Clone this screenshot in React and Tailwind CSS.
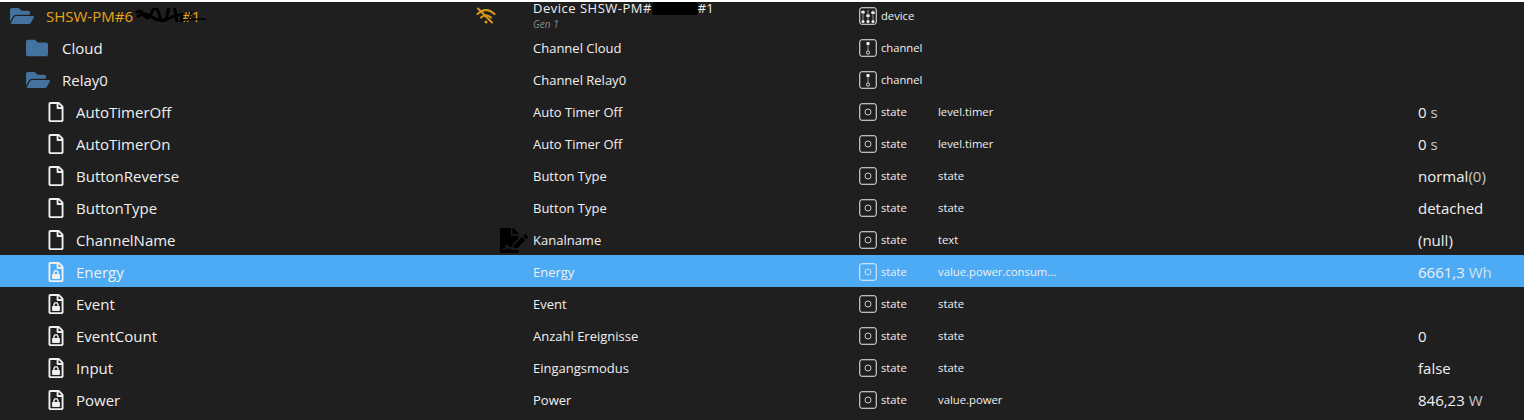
import { FaFolder, FaFolderOpen, FaRegFile, FaFileSignature, FaLock } from 'react-icons/fa'

const rows = [
  { kind: 'open', level: 0, name: 'SHSW-PM#6', device: true, title: 'Device SHSW-PM#', type: 'device' },
  { kind: 'folder', level: 1, name: 'Cloud', title: 'Channel Cloud', type: 'channel' },
  { kind: 'open', level: 1, name: 'Relay0', title: 'Channel Relay0', type: 'channel' },
  { kind: 'file', level: 2, name: 'AutoTimerOff', title: 'Auto Timer Off', type: 'state', role: 'level.timer', value: '0', unit: ' s' },
  { kind: 'file', level: 2, name: 'AutoTimerOn', title: 'Auto Timer Off', type: 'state', role: 'level.timer', value: '0', unit: ' s' },
  { kind: 'file', level: 2, name: 'ButtonReverse', title: 'Button Type', type: 'state', role: 'state', value: 'normal', unit: '(0)' },
  { kind: 'file', level: 2, name: 'ButtonType', title: 'Button Type', type: 'state', role: 'state', value: 'detached' },
  { kind: 'file', level: 2, name: 'ChannelName', title: 'Kanalname', type: 'state', role: 'text', value: '(null)', edit: true },
  { kind: 'lock', level: 2, name: 'Energy', title: 'Energy', type: 'state', role: 'value.power.consum...', value: '6661,3', unit: ' Wh', selected: true },
  { kind: 'lock', level: 2, name: 'Event', title: 'Event', type: 'state', role: 'state' },
  { kind: 'lock', level: 2, name: 'EventCount', title: 'Anzahl Ereignisse', type: 'state', role: 'state', value: '0' },
  { kind: 'lock', level: 2, name: 'Input', title: 'Eingangsmodus', type: 'state', role: 'state', value: 'false' },
  { kind: 'lock', level: 2, name: 'Power', title: 'Power', type: 'state', role: 'value.power', value: '846,23', unit: ' W' },
]

function TypeIcon({ type }) {
  return (
    <svg viewBox="0 0 18 18" className="w-[18px] h-[18px] shrink-0" fill="none" stroke="currentColor">
      <rect x="0.75" y="0.75" width="16.5" height="16.5" rx="2" strokeWidth="1" />
      {type === 'state' && <circle cx="9" cy="9" r="3" strokeWidth="1" opacity="0.8" />}
      {type === 'channel' && (
        <g>
          <path d="M9 3v9" strokeWidth="0.8" opacity="0.7" />
          <rect x="7.5" y="3" width="3" height="3" fill="currentColor" stroke="none" />
          <circle cx="9" cy="13.5" r="1.6" strokeWidth="0.9" />
        </g>
      )}
      {type === 'device' && (
        <g>
          <path d="M4 3v10M9 3v10M14 3v10" strokeWidth="0.8" opacity="0.7" />
          <rect x="2.3" y="4" width="3.4" height="2.4" fill="currentColor" stroke="none" />
          <rect x="7.3" y="7.5" width="3.4" height="2.4" fill="currentColor" stroke="none" />
          <rect x="12.3" y="4.5" width="3.4" height="2.4" fill="currentColor" stroke="none" />
          <circle cx="4" cy="14.5" r="1.5" fill="currentColor" stroke="none" />
          <circle cx="9" cy="14.5" r="1.5" fill="currentColor" stroke="none" />
          <circle cx="14" cy="14.5" r="1.5" fill="currentColor" stroke="none" />
        </g>
      )}
    </svg>
  )
}

function WifiOff() {
  return (
    <svg viewBox="0 0 20 18" className="absolute left-[476px] top-[6px] w-[20px] h-[18px]" fill="none" stroke="#d99a1c" strokeWidth="2" strokeLinecap="round">
      <path d="M1.5 7 Q10 -1 18.5 7" />
      <path d="M5 10.5 Q10 6 15 10.5" />
      <path d="M2 1.5 L16 15.5" />
      <circle cx="10" cy="15" r="1.5" fill="#d99a1c" stroke="none" />
    </svg>
  )
}

function TreeIcon({ kind }) {
  if (kind === 'open') return <FaFolderOpen className="w-[24px] h-[24px] text-[#44729f]" />
  if (kind === 'folder') return <FaFolder className="w-[22px] h-[22px] text-[#44729f]" />
  return (
    <span className="relative flex w-[16px] h-[20px] items-center justify-center">
      <FaRegFile className="w-[16px] h-[20px]" />
      {kind === 'lock' && <FaLock className="absolute left-[4px] top-[7.5px] w-[8px] h-[9px]" />}
    </span>
  )
}

function Row({ row }) {
  const pad = ['pl-[10px]', 'pl-[26px]', 'pl-[48px]'][row.level]
  const gap = ['w-[36px]', 'w-[36px]', 'w-[28px]'][row.level]
  return (
    <div className={`flex h-[32px] items-center pt-[2px] ${row.selected ? 'bg-[#4dabf5]' : ''}`}>
      <div className={`relative flex w-[533px] h-full shrink-0 items-center ${pad}`}>
        <span className={`flex ${gap} shrink-0 items-center`}><TreeIcon kind={row.kind} /></span>
        <span className={`text-[15px] ${row.device ? 'text-[#e8a317]' : ''}`}>{row.name}</span>
        {row.device && (
          <>
            <span className="absolute left-[182px] top-[4px] text-[15px] text-[#e8a317]">#1</span>
            <svg viewBox="0 0 72 14" className="absolute left-[134px] top-[7px] w-[72px] h-[14px]" fill="none" stroke="#000" strokeWidth="3">
              <path d="M2 5 Q6 0 10 7 T18 4 T26 9 T34 3 T42 8 T48 5 M3 9 Q10 3 18 9 T36 10 T48 8" />
              <path d="M46 12 L72 11 M58 3 L54 12" strokeWidth="1.4" />
            </svg>
            <WifiOff />
          </>
        )}
        {row.edit && <FaFileSignature className="absolute left-[499px] top-[3px] w-[30px] h-[25px] text-black" />}
      </div>
      <div className="w-[326px] shrink-0 relative mt-[-2px]">
        {row.device ? (
          <div className="flex flex-col">
            <span className="text-[13px] leading-[16px] flex items-center">
              <span className="tracking-[0.5px]">{row.title}</span>
              <span className="inline-block w-[46px] h-[13px] rounded-[3px] bg-black" />
              #1
            </span>
            <span className="text-[10px] italic text-[#8a8a8a] leading-[12px] mt-[2px]">Gen 1</span>
          </div>
        ) : (
          <span className="text-[13px]">{row.title}</span>
        )}
      </div>
      <div className="flex w-[79px] shrink-0 items-center gap-[4px] text-[11.2px]">
        <TypeIcon type={row.type} />
        {row.type}
      </div>
      <div className="w-[480px] shrink-0 text-[11.3px]">{row.role}</div>
      <div className="text-[15px]">
        {row.value}
        {row.unit && <span className="opacity-80">{row.unit}</span>}
      </div>
    </div>
  )
}

export default function App() {
  return (
    <div className="w-[1524px] h-[420px] overflow-hidden bg-[#1f1f1f] text-[#f0f0f0] border-t-2 border-white" style={{ fontFamily: '"Open Sans", sans-serif' }}>
      <div className="mt-[-3px]">
        {rows.map((r) => <Row key={r.name} row={r} />)}
      </div>
    </div>
  )
}
